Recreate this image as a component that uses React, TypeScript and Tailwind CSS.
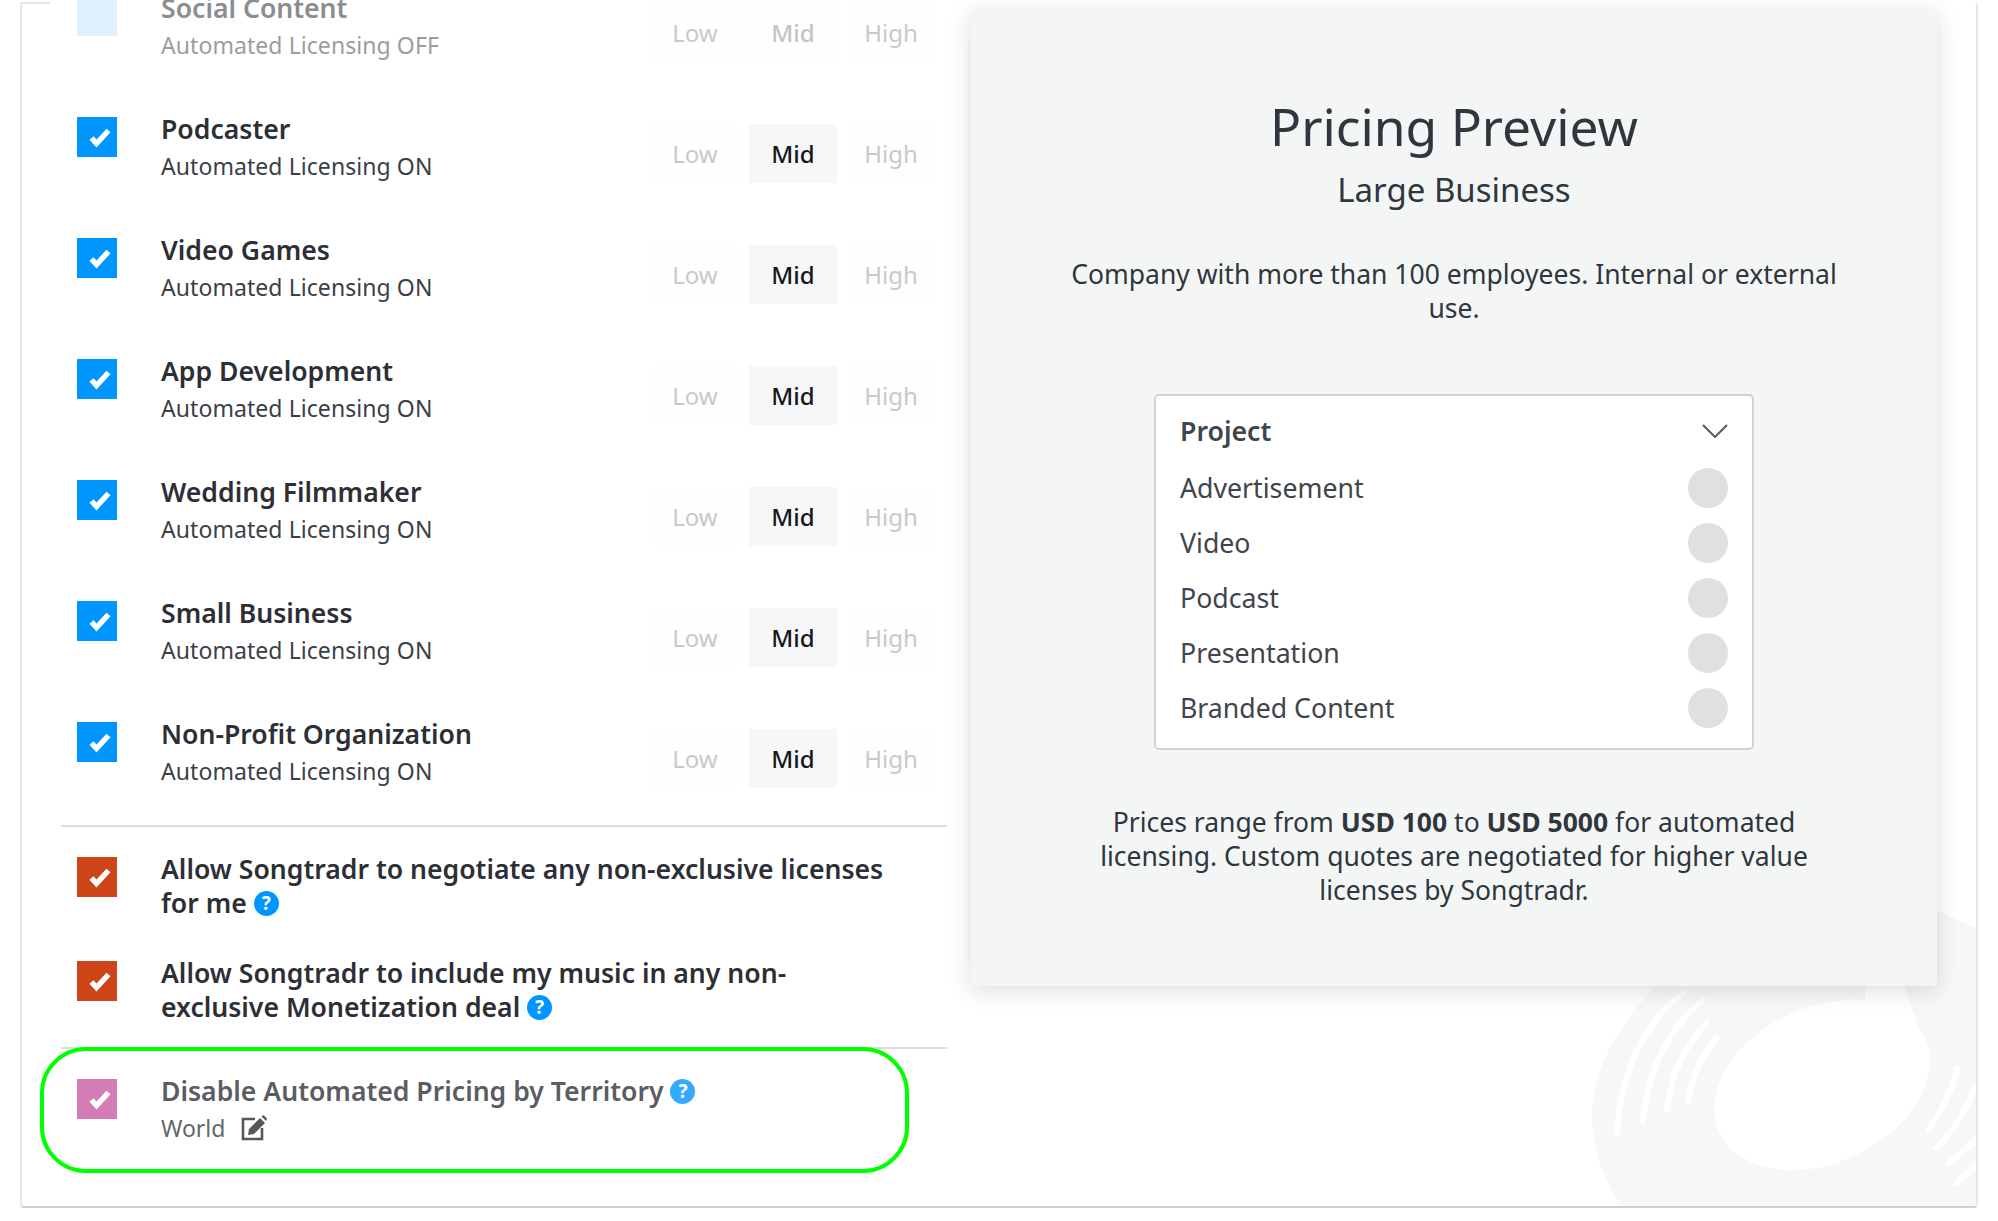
import React from "react";

const font = { fontFamily: '"Noto Sans", sans-serif' };

function Check({ className, empty }: { className: string; empty?: boolean }) {
  return (
    <div className={`mt-[4px] w-[40px] h-[40px] shrink-0 ${className}`}>
      {!empty && (
        <svg viewBox="0 0 40 40" className="w-[40px] h-[40px]">
          <polyline points="14.5,21 19.5,26.5 31.5,13.5" fill="none" stroke="#fff" strokeWidth="5.5" />
        </svg>
      )}
    </div>
  );
}

function Level({ label, active, dim }: { label: string; active?: boolean; dim?: boolean }) {
  return (
    <div
      className={`w-[88px] h-[59px] pt-[1px] flex items-center justify-center text-[24px] ${
        active ? "bg-[#f6f7f9] text-[#16181b] font-medium" : dim ? "bg-[#fefefe] text-[#c4c4c4] font-medium" : "bg-[#fefefe] text-[#c9c9c9]"
      }`}
    >
      {label}
    </div>
  );
}

function Row({ title, on }: { title: string; on: boolean }) {
  return (
    <div className="h-[108px] flex">
      <Check className={on ? "bg-[#0096ff]" : "bg-[#dff1ff]"} empty={!on} />
      <div className={`ml-[44px] flex-1 -mt-[1px] ${on ? "text-[#3b4046]" : "text-[#9a9da0]"}`}>
        <div className={`text-[26.6px] leading-[34px] font-semibold ${on ? "text-[#2c3036]" : "text-[#8a8d91]"}`}>{title}</div>
        <div className="mt-[3px] text-[23px] leading-[34px] tracking-[0.07px]">Automated Licensing {on ? "ON" : "OFF"}</div>
      </div>
      <div className="mt-[11px] flex gap-[10px]">
        <Level label="Low" />
        <Level label="Mid" active={on} dim={!on} />
        <Level label="High" />
      </div>
    </div>
  );
}

function Help({ color }: { color: string }) {
  return (
    <span className={`inline-flex w-[25px] h-[25px] rounded-full items-center justify-center align-[3px] text-white text-[19px] leading-[25px] font-bold ${color}`}>
      ?
    </span>
  );
}

const rows = ["Social Content", "Podcaster", "Video Games", "App Development", "Wedding Filmmaker", "Small Business", "Non-Profit Organization"];
const projects = ["Advertisement", "Video", "Podcast", "Presentation", "Branded Content"];

export default function App() {
  return (
    <div className="relative h-[1221px] bg-white overflow-hidden pt-[2px] pl-[20px] pr-[20px]" style={font}>
      <div className="relative h-[1206px] rounded-[4px] border-l-2 border-r-2 border-b-2 border-l-[#e8e8e8] border-r-[#e8e8e8] border-b-[#cfcfcf] bg-white flex">
        {/* top edge fragment */}
        <div className="absolute -left-[2px] top-0 w-[30px] h-[2px] bg-[#e4e4e4] rounded-tl-[4px]" />
        {/* vinyl watermark */}
        <svg className="absolute right-0 bottom-0 w-[420px] h-[320px]" viewBox="0 0 420 320">
          <path d="M421 42 L381 25 C250 -10 150 40 97 102 C55 150 36 190 36 228 C36 265 48 295 67 321 H421 Z" fill="#f7f7f7" />
          <ellipse cx="266" cy="199" rx="113" ry="78" transform="rotate(-25 266 199)" fill="#fff" />
          <polygon points="309,117 309,100 348,100 371,165" fill="#fff" />
          <g fill="none" stroke="#fff" strokeWidth="6" strokeLinecap="round">
            <path d="M61 247 C64 190 85 140 127 107" />
            <path d="M87 235 C92 185 110 145 146 115" />
            <path d="M111 223 C115 190 128 160 151 137" />
            <path d="M132 215 C136 192 144 170 161 152" />
            <path d="M401 183 C396 205 386 225 373 243" />
            <path d="M420 200 C410 225 398 245 380 262" />
            <path d="M421 252 C412 262 402 270 392 278" />
            <path d="M421 278 C414 285 408 291 401 297" />
          </g>
        </svg>

        <div className="relative w-[949px] -mt-[10px] shrink-0">
          <div className="pl-[55px] pr-[36px] flex flex-col gap-[13px]">
            {rows.map((r, i) => (
              <Row key={r} title={r} on={i > 0} />
            ))}
          </div>
          <div className="-mt-[1px] ml-[39px] mr-[24px] h-[2px] bg-[#dddddd] mb-[26px]" />
          <div className="pl-[55px] flex flex-col gap-[36px]">
            <div className="flex">
              <Check className="bg-[#cd4517]" />
              <div className="ml-[44px] w-[729px] -mt-[1px] mb-[1px] h-[68px] text-[26.6px] leading-[34px] font-semibold text-[#2c3036]">
                Allow Songtradr to negotiate any non-exclusive licenses for me <Help color="bg-[#0096ff]" />
              </div>
            </div>
            <div className="flex">
              <Check className="bg-[#cd4517]" />
              <div className="ml-[44px] w-[729px] -mt-[1px] mb-[1px] h-[68px] text-[26.6px] leading-[34px] font-semibold text-[#2c3036]">
                Allow Songtradr to include my music in any non-exclusive Monetization deal <Help color="bg-[#0096ff]" />
              </div>
            </div>
          </div>
          <div className="mt-[22px] ml-[39px] mr-[24px] h-[2px] bg-[#dddddd]" />
          <div className="relative pl-[55px] pt-[26px]">
            <div className="absolute left-[18px] -top-[2px] w-[869px] h-[126px] rounded-[46px] border-[4px] border-[#00ff00]" />
            <div className="flex">
              <Check className="bg-[#d47cb5]" />
              <div className="ml-[44px] -mt-[1px]">
                <div className="h-[34px] text-[26.6px] leading-[34px] font-semibold text-[#5a5d62]">
                  Disable Automated Pricing by Territory <Help color="bg-[#33a9ff]" />
                </div>
                <div className="mt-[3px] flex items-center text-[23px] leading-[34px] text-[#63676c]">
                  World
                  <svg viewBox="0 0 26 26" className="ml-[16px] -mt-[1px] w-[26px] h-[26px]">
                    <path d="M14 4 H2 V24 H21 V13" fill="none" stroke="#55585c" strokeWidth="2.6" />
                    <polygon points="7,20 8,14 19,3 24,8 13,19" fill="#55585c" />
                    <polygon points="20.5,1.5 22.5,0 26,3.5 25,6" fill="#55585c" />
                  </svg>
                </div>
              </div>
            </div>
          </div>
        </div>

        <div className="relative mt-[8px] w-[966px] h-[976px] shrink-0 rounded-[3px] bg-[#f4f6f6] shadow-[0_4px_24px_rgba(0,0,0,0.14)] flex flex-col items-center text-[#2f363d]">
          <div className="mt-[86px] text-[51.5px] leading-[60px]">Pricing Preview</div>
          <div className="mt-[12px] text-[33px] leading-[44px]">Large Business</div>
          <div className="mt-[45px] w-[790px] text-center text-[26.5px] leading-[34px]">
            Company with more than 100 employees. Internal or external use.
          </div>
          <div className="mt-[69px] w-[600px] h-[356px] rounded-[5px] border-2 border-[#ccd3dc] bg-white px-[24px] pt-[18px] text-[#40454b]">
            <div className="flex items-center justify-between h-[34px]">
              <span className="text-[26.7px] font-semibold">Project</span>
              <svg viewBox="0 0 26 14" className="w-[26px] h-[14px]">
                <polyline points="1,1 13,13 25,1" fill="none" stroke="#555a60" strokeWidth="2" />
              </svg>
            </div>
            <div className="mt-[20px] flex flex-col gap-[15px]">
              {projects.map((p) => (
                <div key={p} className="flex items-center justify-between h-[40px] text-[26.7px]">
                  <span>{p}</span>
                  <span className="-mt-[1px] w-[40px] h-[40px] rounded-full bg-[#e0e0e0]" />
                </div>
              ))}
            </div>
          </div>
          <div className="mt-[55px] w-[730px] text-center text-[26.5px] leading-[34px]">
            Prices range from <b className="font-bold">USD 100</b> to <b className="font-bold">USD 5000</b> for automated licensing. Custom quotes are negotiated for higher value licenses by Songtradr.
          </div>
        </div>
      </div>
    </div>
  );
}
